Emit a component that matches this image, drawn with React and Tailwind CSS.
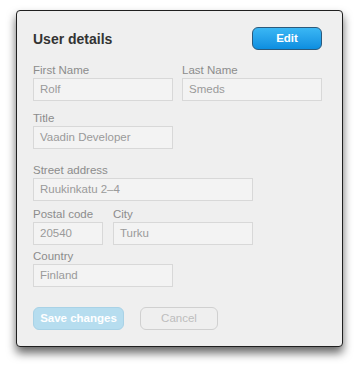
import React from "react";

const font = { fontFamily: '"Liberation Sans", Arial, sans-serif' };

function Field({ label, value, w, className = "" }) {
  return (
    <div className={"flex flex-col " + className}>
      <div className="h-[16px] text-[11.5px] leading-[16px] text-[#8c8c8c]">{label}</div>
      <div
        className={
          "h-[23px] border border-[#d8d8d8] bg-[#f3f3f3] pl-[6px] text-[11.5px] leading-[21px] text-[#9a9a9a] " + w
        }
      >
        {value}
      </div>
    </div>
  );
}

export default function App() {
  return (
    <div className="min-h-[368px] w-[357px] bg-white pl-[16px] pt-[10px]" style={font}>
      <div className="flex h-[337px] w-[327px] flex-col rounded-[4px] border border-[#1f1f1f] bg-[#efefef] pl-[16px] shadow-[0_6px_10px_rgba(0,0,0,0.6)]">
        <div className="flex items-center justify-between pr-[20px] pt-[16px]">
          <div className="text-[14px] font-bold leading-[18px] text-[#333333]">User details</div>
          <button className="h-[23px] w-[70px] rounded-[6px] border border-[#2b5a7c] bg-gradient-to-b from-[#3ab7f4] to-[#0b8ee0] text-[11.5px] font-bold text-white">
            Edit
          </button>
        </div>
        <div className="mt-[12px] flex gap-[9px]">
          <Field label="First Name" value="Rolf" w="w-[140px]" />
          <Field label="Last Name" value="Smeds" w="w-[140px]" />
        </div>
        <Field className="mt-[9px]" label="Title" value="Vaadin Developer" w="w-[140px]" />
        <Field className="mt-[13px]" label="Street address" value="Ruukinkatu 2–4" w="w-[220px]" />
        <div className="mt-[5px] flex gap-[10px]">
          <Field label="Postal code" value="20540" w="w-[70px]" />
          <Field label="City" value="Turku" w="w-[140px]" />
        </div>
        <Field className="mt-[3px]" label="Country" value="Finland" w="w-[140px]" />
        <div className="mt-[20px] flex gap-[16px]">
          <button className="h-[23px] w-[91px] rounded-[6px] border border-[#a9d2e6] bg-[#b6ddef] text-[11.5px] font-bold text-white">
            Save changes
          </button>
          <button className="h-[23px] w-[78px] rounded-[6px] border border-[#d0d0d0] bg-[#efefef] text-[11.5px] text-[#bdbdbd]">
            Cancel
          </button>
        </div>
      </div>
    </div>
  );
}
